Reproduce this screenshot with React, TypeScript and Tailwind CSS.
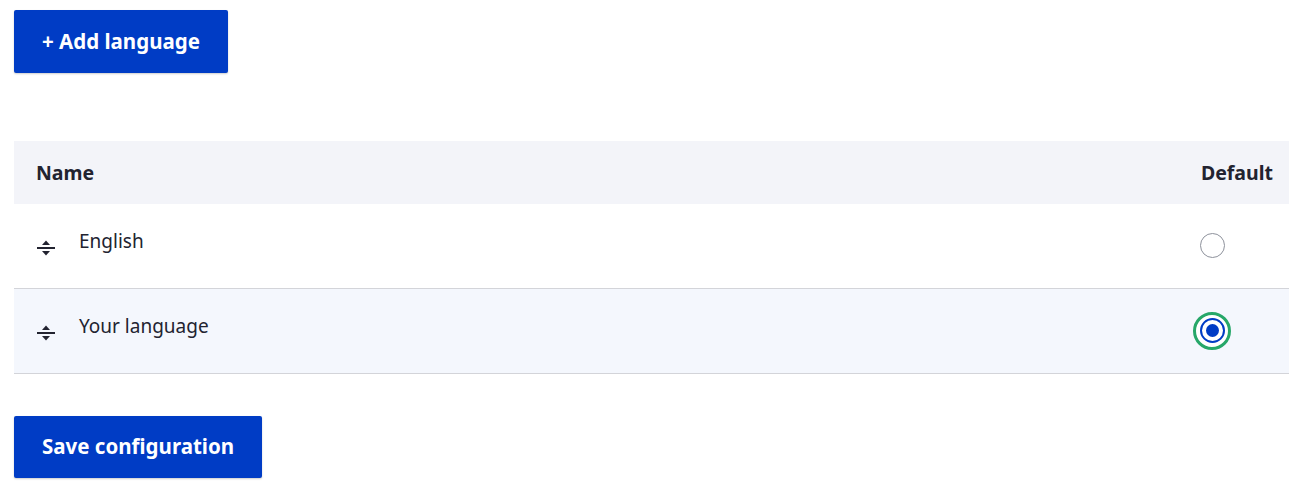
import { useState } from "react"

const LANGS = [
  { id: "en", name: "English" },
  { id: "yours", name: "Your language" },
]

const FONT = { fontFamily: '"Noto Sans", "Open Sans", sans-serif' }

function DragHandle() {
  return (
    <svg width="18" height="20" viewBox="0 0 18 20" className="shrink-0">
      <path d="M9 2.5 L13 7 H5 Z" fill="#222330" />
      <rect x="0" y="9" width="18" height="2" fill="#222330" />
      <path d="M9 17.5 L13 13 H5 Z" fill="#222330" />
    </svg>
  )
}

function Radio({ checked, onClick }: { checked: boolean; onClick: () => void }) {
  if (checked) {
    return (
      <button onClick={onClick} className="w-[38px] h-[38px] rounded-full border-[3px] border-[#26a769] bg-white flex items-center justify-center">
        <span className="w-[25px] h-[25px] rounded-full border-[2px] border-[#003cc5] bg-white flex items-center justify-center">
          <span className="w-[13px] h-[13px] rounded-full bg-[#003cc5]" />
        </span>
      </button>
    )
  }
  return (
    <button onClick={onClick} className="w-[38px] h-[38px] flex items-center justify-center">
      <span className="w-[25px] h-[25px] rounded-full border border-[#8e929c] bg-white" />
    </button>
  )
}

export default function App() {
  const [selected, setSelected] = useState("yours")

  return (
    <div className="bg-white min-h-screen pl-[14px] pt-[10px] text-[#222330]" style={FONT}>
      <button className="h-[63px] px-[28px] bg-[#003cc5] text-white text-[20.5px] font-bold rounded-[2px] shadow-[0_1px_2px_rgba(0,0,0,0.2)]">
        + Add language
      </button>

      <table className="mt-[68px] w-[1275px] border-collapse">
        <thead>
          <tr className="bg-[#f3f4f9] h-[63px]">
            <th className="text-left pl-[22px] text-[19.5px] font-bold">Name</th>
            <th className="text-right pr-[16px] text-[19.5px] font-bold">Default</th>
          </tr>
        </thead>
        <tbody>
          {LANGS.map((lang, i) => (
            <tr key={lang.id} className={`${i === 0 ? "h-[84px]" : "h-[85px]"} border-b border-[#d3d4d9] ${selected === lang.id ? "bg-[#f4f7fd]" : "bg-white"}`}>
              <td className="pl-[23px]">
                <div className="flex items-center gap-[24px]">
                  <span className="mt-[4px]"><DragHandle /></span>
                  <span className="text-[19px] -mt-[9px]">{lang.name}</span>
                </div>
              </td>
              <td className="pr-[58px]">
                <div className="flex justify-end">
                  <Radio checked={selected === lang.id} onClick={() => setSelected(lang.id)} />
                </div>
              </td>
            </tr>
          ))}
        </tbody>
      </table>

      <button className="mt-[42px] h-[62px] px-[28px] bg-[#003cc5] text-white text-[20.5px] font-bold rounded-[2px] shadow-[0_1px_2px_rgba(0,0,0,0.2)]">
        Save configuration
      </button>
    </div>
  )
}
